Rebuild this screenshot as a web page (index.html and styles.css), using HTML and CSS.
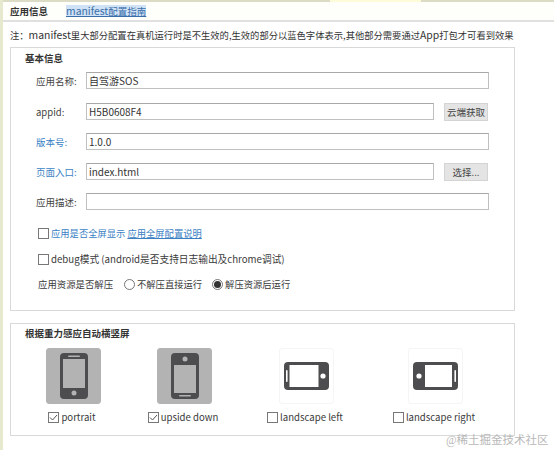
FILE: index.html
```html
<!DOCTYPE html>
<html lang="zh">
<head>
<meta charset="utf-8">
<title>manifest</title>
<link rel="stylesheet" href="styles.css">
</head>
<body>
<div class="page">
  <div class="strip"><span class="strip-a"></span><span class="strip-tab"></span><span class="strip-b"></span></div>
  <header class="tabbar">
    <span class="tab-title">应用信息</span>
    <a class="tab-link"><span class="lat">manifest</span>配置指南</a>
  </header>
  <p class="note">注：<span class="lat">manifest</span>里大部分配置在真机运行时是不生效的,生效的部分以蓝色字体表示,其他部分需要通过<span class="lat">App</span>打包才可看到效果</p>
  <section class="group basic">
    <h2 class="group-title">基本信息</h2>
    <div class="row tall"><label class="lbl">应用名称:</label><div class="field wide">自驾游SOS</div></div>
    <div class="row"><label class="lbl">appid:</label><div class="field short">H5B0608F4</div><button class="btn">云端获取</button></div>
    <div class="row"><label class="lbl blue">版本号:</label><div class="field wide">1.0.0</div></div>
    <div class="row"><label class="lbl blue">页面入口:</label><div class="field short">index.html</div><button class="btn">选择...</button></div>
    <div class="row"><label class="lbl">应用描述:</label><div class="field wide"></div></div>
    <div class="check-row first"><span class="box"></span><span class="blue">应用是否全屏显示</span><a class="blue link">应用全屏配置说明</a></div>
    <div class="check-row second"><span class="box"></span><span>debug模式 (android是否支持日志输出及chrome调试)</span></div>
    <div class="radio-row"><span class="radio-label">应用资源是否解压</span>
      <span class="radio-item"><span class="radio"></span>不解压直接运行</span>
      <span class="radio-item"><span class="radio on"></span>解压资源后运行</span>
    </div>
  </section>
  <section class="group orient">
    <h2 class="group-title">根据重力感应自动横竖屏</h2>
    <div class="orient-grid">
      <div class="opt o1">
        <div class="tile on"><svg width="28" height="46" viewBox="0 0 28 46"><rect width="28" height="46" rx="4" fill="#4d4d4f"/><rect x="3" y="6" width="22" height="29" fill="#b3b3b3"/><rect x="8" y="2.4" width="12" height="1.6" rx=".8" fill="#b3b3b3"/><circle cx="14" cy="40" r="2.5" fill="#b3b3b3"/></svg></div>
        <div class="opt-label"><span class="box checked"><svg width="11" height="11" viewBox="0 0 11 11"><path d="M2 5.5l2.500 2.500 4.500-5" fill="none" stroke="#555" stroke-width="1"/></svg></span>portrait</div>
      </div>
      <div class="opt o2">
        <div class="tile on"><svg width="28" height="46" viewBox="0 0 28 46"><rect width="28" height="46" rx="4" fill="#4d4d4f"/><rect x="3" y="12" width="22" height="28" fill="#b3b3b3"/><rect x="8" y="42" width="12" height="1.6" rx=".8" fill="#b3b3b3"/><circle cx="14" cy="6" r="2.5" fill="#b3b3b3"/></svg></div>
        <div class="opt-label"><span class="box checked"><svg width="11" height="11" viewBox="0 0 11 11"><path d="M2 5.5l2.500 2.500 4.500-5" fill="none" stroke="#555" stroke-width="1"/></svg></span>upside down</div>
      </div>
      <div class="opt o3">
        <div class="tile"><svg width="45" height="28" viewBox="0 0 45 28"><rect width="45" height="28" rx="4" fill="#4d4d4f"/><rect x="5.500" y="3" width="29" height="22" fill="#fff"/><rect x="2" y="8" width="1.6" height="12" rx=".8" fill="#fff"/><circle cx="39" cy="14" r="2.6" fill="#fff"/></svg></div>
        <div class="opt-label"><span class="box"></span>landscape left</div>
      </div>
      <div class="opt o4">
        <div class="tile"><svg width="45" height="28" viewBox="0 0 45 28"><rect width="45" height="28" rx="4" fill="#4d4d4f"/><rect x="12" y="3" width="27" height="22" fill="#fff"/><rect x="41.400" y="8" width="1.6" height="12" rx=".8" fill="#fff"/><circle cx="6" cy="14" r="2.6" fill="#fff"/></svg></div>
        <div class="opt-label"><span class="box"></span>landscape right</div>
      </div>
    </div>
  </section>
  <div class="watermark">@稀土掘金技术社区</div>
</div>
</body>
</html>
```
FILE: styles.css
```css
* { box-sizing: border-box; }
html, body { margin: 0; height: 100%; }
body { background: #fff; color: #3a3a3a; font: 9.5px "Noto Sans CJK SC", "Noto Sans", sans-serif; overflow: hidden; }
.page { position: relative; width: 554px; height: 450px; border-left: 3px solid #e6e9cd; }
.strip { display: flex; height: 2px; }
.strip-a { width: 327px; background: #dcdcc6; }
.strip-tab { width: 91px; background: #fefbd9; }
.strip-b { flex: 1; background: #dcdcc6; }
.tabbar { height: 20px; background: #fefefa; border-bottom: 2px solid #e0e0e0; display: flex; align-items: center; gap: 18px; padding-left: 7px; }
.tab-title { font-weight: 700; color: #333; }
.tab-link { color: #3a6ea8; background: #cfe2f6; text-decoration: underline; line-height: 12px; }
.lat { font-size: 10.4px; }
.note { margin: 0; padding: 6px 0 0 7px; height: 25px; font-size: 9.3px; line-height: 14px; white-space: nowrap; color: #333; }
.group { margin-left: 7px; width: 505px; border: 1px solid #d9d9d9; }
.basic { height: 264px; padding: 1px 0 0 14px; }
.group-title { margin: 0; font-size: 9.5px; font-weight: 700; line-height: 18px; color: #333; }
.row { display: flex; align-items: center; height: 17px; margin-bottom: 13px; }
.row.tall { margin-top: 5px; margin-bottom: 14px; }
.lbl { width: 50px; margin-left: 11px; color: #444; white-space: nowrap; }
.blue { color: #3a7fc4; }
.field { height: 17px; border: 1px solid #c0c0c0; border-top-color: #a8a8a8; background: #fff; padding-left: 2px; font-size: 10px; line-height: 16px; color: #333; }
.field.wide { width: 403px; }
.field.short { width: 348px; }
.btn { width: 44px; height: 18px; margin-left: 10px; padding: 0; border: 1px solid #d4d4d4; background: #e4e4e4; font: 9.5px "Noto Sans CJK SC", sans-serif; color: #444; flex: none; }
.box { display: inline-block; width: 11px; height: 11px; border: 1px solid #777; background: #fff; flex: none; }
.check-row { display: flex; align-items: center; gap: 2px; margin-left: 13px; height: 14px; font-size: 9.3px; white-space: nowrap; }
.check-row .link { text-decoration: underline; }
.check-row.first { margin-top: 16px; }
.check-row.second { margin-top: 12px; font-size: 9.7px; }
.radio-row { display: flex; align-items: center; margin: 11px 0 0 13px; height: 14px; font-size: 9.3px; white-space: nowrap; }
.radio-label { font-size: 9.4px; }
.radio-item { display: flex; align-items: center; gap: 2px; margin-left: 11px; }
.radio-item + .radio-item { margin-left: 10px; }
.radio { width: 11px; height: 11px; border: 1px solid #777; border-radius: 50%; background: #fff; display: inline-flex; align-items: center; justify-content: center; }
.radio.on::after { content: ""; width: 7px; height: 7px; border-radius: 50%; background: #333; }
.orient { margin-top: 12px; height: 113px; padding: 1px 0 0 14px; }
.orient .group-title { line-height: 16px; }
.orient-grid { display: flex; margin-top: 7px; margin-left: 21px; }
.opt { width: 55px; display: flex; flex-direction: column; align-items: center; flex: none; }
.o2 { margin-left: 56px; }
.o3 { margin-left: 67px; }
.o4 { margin-left: 74px; }
.tile { width: 55px; height: 56px; border-radius: 3px; display: flex; align-items: center; justify-content: center; border: 1px solid #f5f5f5; flex: none; }
.tile.on { background: #b3b3b3; border-color: #b3b3b3; }
.opt-label { display: flex; align-items: center; gap: 2px; margin-top: 6px; padding-right: 3px; font-size: 9.6px; white-space: nowrap; line-height: 14px; }
.box.checked { display: inline-flex; align-items: center; justify-content: center; }
.box.checked svg { display: block; flex: none; margin: -1px; }
.watermark { position: absolute; left: 443px; top: 431px; font: 11.500px "Liberation Serif", "Noto Sans CJK SC", sans-serif; color: #b8b8b8; white-space: nowrap; }
```
